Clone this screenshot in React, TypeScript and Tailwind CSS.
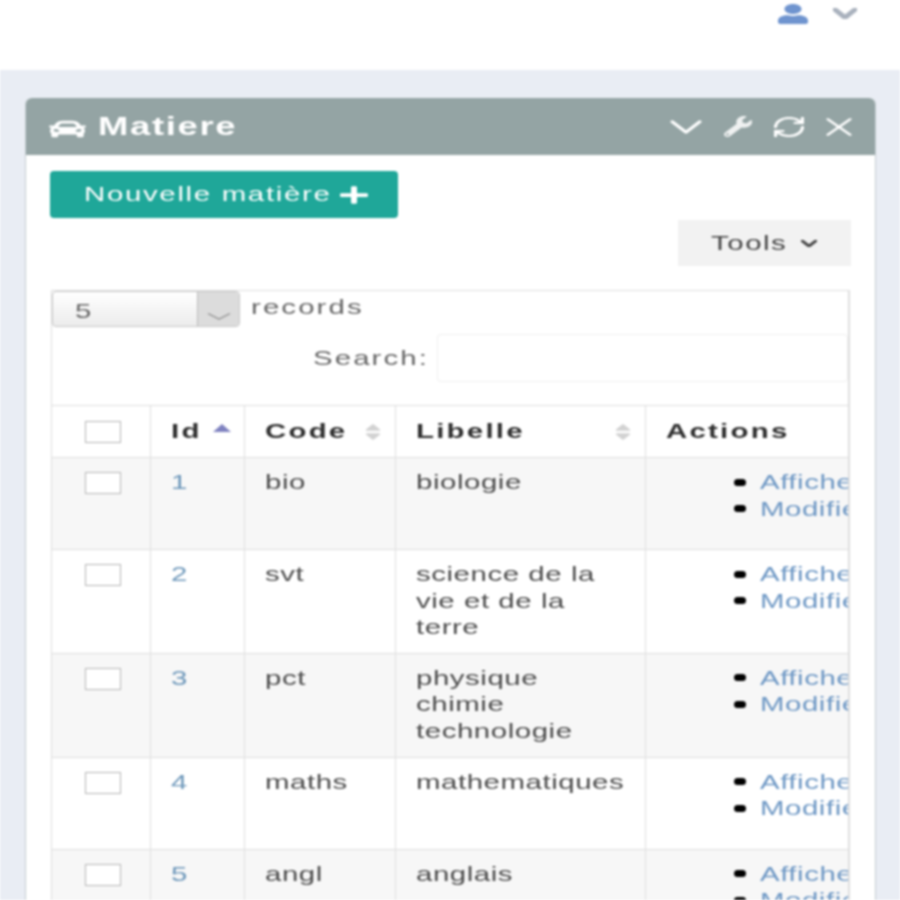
import type { ReactNode } from 'react';
import { ChevronDown, RefreshCw, X } from 'lucide-react';
import { FaCar, FaPlus, FaUser, FaWrench, FaSort } from 'react-icons/fa';

const rows = [
  { id: 1, code: 'bio', libelle: ['biologie'], height: 'h-[92px]' },
  { id: 2, code: 'svt', libelle: ['science de la', 'vie et de la', 'terre'], height: 'h-[102px]' },
  { id: 3, code: 'pct', libelle: ['physique', 'chimie', 'technologie'], height: 'h-[104px]' },
  { id: 4, code: 'maths', libelle: ['mathematiques'], height: 'h-[92px]' },
  { id: 5, code: 'angl', libelle: ['anglais'], height: 'h-[92px]' },
];

// the screenshot is stretched sideways, so the letters are too
function Wide({ children }: { children: ReactNode }) {
  return <span className="inline-block origin-left scale-x-[1.4] whitespace-nowrap">{children}</span>;
}

function Checkbox() {
  return <div className="h-[22px] w-[36px] border border-[#b5b5b5] bg-white" />;
}

// tight viewBox so the chevron fills the box it is given
function Chevron({ className, strokeWidth = 1.6 }: { className: string; strokeWidth?: number }) {
  return <ChevronDown className={className} viewBox="5 8 14 8" preserveAspectRatio="none" strokeWidth={strokeWidth} />;
}

function ActionLink({ children }: { children: ReactNode }) {
  return (
    <li className="flex items-center gap-[14px]">
      <span className="h-[7px] w-[12px] rounded-full bg-black" />
      <Wide>{children}</Wide>
    </li>
  );
}

export default function App() {
  return (
    <div className="h-[900px] overflow-hidden bg-white font-['Liberation_Sans',sans-serif] text-[21px] leading-[26.5px] tracking-[0.4px] text-[#4c4c4c] blur-[0.8px]">
      {/* top bar */}
      <div className="flex h-[70px] items-start justify-end gap-[25px] pr-[43px] pt-[4px]">
        <FaUser className="h-[20px] w-[30px] text-[#6f94cf]" preserveAspectRatio="none" />
        <Chevron className="mt-[4px] h-[11px] w-[24px] text-[#a9b1bd]" strokeWidth={3.2} />
      </div>

      <div className="h-[830px] bg-[#e9edf4] px-[25px] pt-[28px]">
        <div className="h-[900px] w-[851px] rounded-t-[6px] border-x border-[#c4cdd0] bg-white">
          {/* panel header */}
          <div className="flex h-[57px] items-center justify-between rounded-t-[6px] bg-[#94a4a4] pl-[23px] pr-[23px] text-white">
            <div className="flex items-center gap-[12px]">
              <FaCar className="mt-[5px] h-[22px] w-[37px]" preserveAspectRatio="none" />
              <span className="text-[26px] font-bold tracking-[1.2px]"><Wide>Matiere</Wide></span>
            </div>
            <div className="flex items-center gap-[22px]">
              <Chevron className="h-[14px] w-[32px]" />
              <FaWrench className="h-[21px] w-[28px] opacity-85" preserveAspectRatio="none" />
              <RefreshCw className="h-[20px] w-[30px]" viewBox="2 2 20 20" preserveAspectRatio="none" strokeWidth={2.2} />
              <X className="h-[18px] w-[26px]" viewBox="5 5 14 14" preserveAspectRatio="none" strokeWidth={1.6} />
            </div>
          </div>

          <div className="px-[24px] pt-[16px]">
            <button className="flex h-[47px] w-[348px] items-center rounded-[4px] bg-[#1fa799] pl-[34px] tracking-[1.2px] text-white">
              <span className="w-[256px] text-left"><Wide>Nouvelle matière</Wide></span>
              <FaPlus className="h-[20px] w-[28px]" preserveAspectRatio="none" />
            </button>

            <div className="flex justify-end">
              <div className="mt-[2px] flex h-[46px] w-[173px] items-center bg-[#f2f2f2] pl-[33px] tracking-[1.1px] text-[#444]">
                <span className="w-[90px]"><Wide>Tools</Wide></span>
                <Chevron className="h-[7px] w-[16px]" strokeWidth={3} />
              </div>
            </div>

            {/* datatable */}
            <div className="mt-[24px] ml-[1px] h-[700px] w-[799px] overflow-hidden border-l border-r-2 border-t border-[#dedede] tracking-[1.5px]">
              <div className="flex items-start gap-[11px]">
                <div className="flex h-[36px] w-[188px] overflow-hidden rounded-[4px] border border-[#c8c8c8] bg-gradient-to-b from-white to-[#ececec]">
                  <div className="flex-1 pl-[22px] pt-[6px] text-[#666]"><Wide>5</Wide></div>
                  <div className="flex w-[42px] items-end justify-center border-l border-[#bbb] bg-[#dcdcdc] pb-[6px] text-[#999]">
                    <Chevron className="h-[7px] w-[24px]" strokeWidth={1.4} />
                  </div>
                </div>
                <span className="w-[113px] pt-[3px] text-[#666]"><Wide>records</Wide></span>
              </div>

              <div className="flex items-center justify-end pt-[7px]">
                <span className="w-[124px] text-[#666]"><Wide>Search:</Wide></span>
                <div className="h-[48px] w-[411px] rounded-[4px] border border-[#efefef]" />
              </div>

              <table className="mt-[23px] w-[840px] table-fixed border-collapse tracking-[0.4px]">
                <colgroup>
                  <col className="w-[98px]" />
                  <col className="w-[94px]" />
                  <col className="w-[151px]" />
                  <col className="w-[250px]" />
                  <col className="w-[247px]" />
                </colgroup>
                <thead>
                  <tr className="h-[52px] border-y border-[#dedede] text-left font-bold tracking-[1.6px] text-[#2f2f2f]">
                    <th className="border-r border-[#dedede] pl-[33px]"><Checkbox /></th>
                    <th className="border-r border-[#dedede] pl-[20px]">
                      <div className="flex items-center">
                        <span className="w-[42px]"><Wide>Id</Wide></span>
                        <svg className="mb-[7px] h-[8px] w-[18px] text-[#7f82c0]" viewBox="0 0 18 8">
                          <path d="M9 0 18 8H0Z" fill="currentColor" />
                        </svg>
                      </div>
                    </th>
                    <th className="border-r border-[#dedede] pl-[20px]">
                      <div className="flex items-center">
                        <span className="w-[100px]"><Wide>Code</Wide></span>
                        <FaSort className="h-[20px] w-[16px] text-[#d2d2d2]" preserveAspectRatio="none" />
                      </div>
                    </th>
                    <th className="border-r border-[#dedede] pl-[20px]">
                      <div className="flex items-center justify-between pr-[14px]">
                        <Wide>Libelle</Wide>
                        <FaSort className="h-[20px] w-[16px] text-[#d2d2d2]" preserveAspectRatio="none" />
                      </div>
                    </th>
                    <th className="pl-[20px]"><Wide>Actions</Wide></th>
                  </tr>
                </thead>
                <tbody>
                  {rows.map((r) => (
                    <tr key={r.id} className={`border-b border-[#dedede] align-top odd:bg-[#f7f7f7] ${r.height}`}>
                      <td className="border-r border-[#dedede] pl-[33px] pt-[14px]"><Checkbox /></td>
                      <td className="border-r border-[#dedede] pb-[12px] pt-[11px] pl-[20px] text-[#6d97ba]"><Wide>{r.id}</Wide></td>
                      <td className="border-r border-[#dedede] pb-[12px] pt-[11px] pl-[20px]"><Wide>{r.code}</Wide></td>
                      <td className="border-r border-[#dedede] pb-[12px] pt-[11px] pl-[20px]">
                        {r.libelle.map((l) => <div key={l}><Wide>{l}</Wide></div>)}
                      </td>
                      <td className="pb-[12px] pt-[11px] pl-[88px]">
                        <ul className="text-[#6d97c4]">
                          <ActionLink>Afficher</ActionLink>
                          <ActionLink>Modifier</ActionLink>
                        </ul>
                      </td>
                    </tr>
                  ))}
                </tbody>
              </table>
            </div>
          </div>
        </div>
      </div>
    </div>
  );
}
